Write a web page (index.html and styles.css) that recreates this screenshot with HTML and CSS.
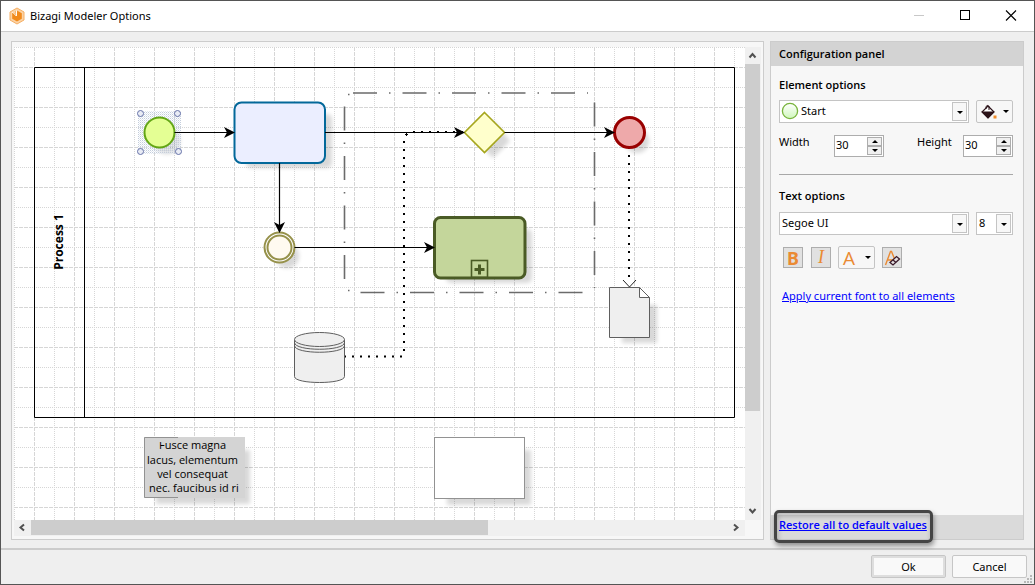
FILE: index.html
```html
<!DOCTYPE html>
<html lang="en">
<head>
<meta charset="utf-8">
<title>Bizagi Modeler Options</title>
<link rel="stylesheet" href="styles.css">
</head>
<body>
<div class="window">
  <header class="titlebar">
    <svg class="logo" width="16" height="18" viewBox="0 0 16 18" aria-hidden="true">
      <path d="M8 1 L15 5 V13 L8 17 L1 13 V5 Z" fill="#fbd3a6" stroke="#f6ae62" stroke-width="1"/>
      <path d="M8 3.6 L12.8 6.2 V11.8 L8 14.6 L3.2 11.8 V6.2 L4.5 5.6 L7 7.6 L6.4 4.6 Z" fill="#f18a1c"/>
      <path d="M3.4 5 L7.4 9 L7.6 3.4" fill="none" stroke="#fff" stroke-width="1"/>
    </svg>
    <h1 class="title">Bizagi Modeler Options</h1>
    <div class="window-buttons">
      <button class="window-button" aria-label="Minimize"><svg width="12" height="12"><path d="M1 5.5H11" stroke="#c8c8c8"/></svg></button>
      <button class="window-button" aria-label="Maximize"><svg width="12" height="12"><rect x="1.500" y="0.500" width="9" height="9" fill="none" stroke="#000"/></svg></button>
      <button class="window-button" aria-label="Close"><svg width="12" height="12"><path d="M1 0.500L11 10.500M11 0.500L1 10.500" stroke="#000" stroke-width="1.1"/></svg></button>
    </div>
  </header>

  <main class="content">
    <section class="canvas-panel">
      <svg class="canvas" role="img" aria-label="Process preview">
        <defs>
          <pattern id="grid" width="40" height="40" patternUnits="userSpaceOnUse">
            <g stroke="#d6d6d6">
              <path d="M0.500 0V40M0 0.500H40" stroke-dasharray="1 1"/>
              <path d="M20.500 0V40M0 20.500H40" stroke-dasharray="4 1"/>
            </g>
          </pattern>
          <pattern id="halftone" width="2" height="2" patternUnits="userSpaceOnUse">
            <rect width="1" height="1" fill="#c3cddc"/><rect x="1" y="1" width="1" height="1" fill="#e2e8f0"/>
          </pattern>
          <filter id="soft" x="-30%" y="-30%" width="160%" height="160%"><feGaussianBlur stdDeviation="2"/></filter>
          <marker id="arrow" markerUnits="userSpaceOnUse" markerWidth="12" markerHeight="12" refX="9" refY="6" orient="auto">
            <path d="M0 0.500 L11 6 L0 11.500 L3 6 Z"/>
          </marker>
        </defs>
        <rect width="100%" height="100%" fill="#fff"/>
        <rect width="100%" height="100%" fill="url(#grid)"/>
        <g transform="translate(-14 -47)">
          <path d="M34.500 67.500H734.500V417.500H34.500ZM84.500 67.500V417.500" fill="none" stroke="#000"/>
          <text class="lane-name" transform="translate(63 242) rotate(-90)" text-anchor="middle">Process 1</text>

          <g fill="#000" opacity=".15" filter="url(#soft)">
            <rect x="246" y="114" width="86" height="54" rx="5"/>
            <rect x="446" y="229" width="86" height="54" rx="5"/>
            <circle cx="167" cy="141" r="13"/>
            <circle cx="287" cy="256" r="12"/>
            <circle cx="637" cy="141" r="12"/>
            <path d="M493 120L510 141L493 158L476 141Z"/>
            <rect x="622" y="305" width="35" height="38"/>
            <rect x="156" y="450" width="94" height="54"/>
            <rect x="447" y="450" width="84" height="55"/>
          </g>

          <g fill="none" stroke="#6b6b6b" stroke-width="1.600">
            <path d="M353 93H588" stroke-dasharray="24 12 1.500 12"/>
            <path d="M344.500 106.500V280" stroke-dasharray="24 12 1.500 12"/>
            <path d="M594.500 102.500V288" stroke-dasharray="24 12 1.500 12"/>
            <path d="M360.500 292.500H584" stroke-dasharray="24 12 1.500 12"/>
            <path d="M348 94.500H349.500M348 290.500H349.500"/>
          </g>

          <path d="M344 356.500H404" fill="none" stroke="#000" stroke-width="2" stroke-dasharray="2 6"/>
          <path d="M404 351V136" fill="none" stroke="#000" stroke-width="2" stroke-dasharray="2 6"/>
          <path d="M413 132H464" fill="none" stroke="#000" stroke-width="2" stroke-dasharray="2 6"/>
          <path d="M405 134.500H408M406.500 133V136" stroke="#000"/>
          <path d="M629 147V278" fill="none" stroke="#000" stroke-width="2" stroke-dasharray="2 6"/>
          <path d="M623 280L629.500 287L636 280" fill="none" stroke="#222"/>

          <rect x="138" y="111" width="43" height="43" fill="url(#halftone)"/>
          <circle cx="159.500" cy="132.500" r="15" fill="#e4ff94" stroke="#62a614" stroke-width="2"/>
          <g fill="#e9ecf5" stroke="#6571a8">
            <circle cx="140.500" cy="113.500" r="3"/><circle cx="177.500" cy="113.500" r="3"/>
            <circle cx="140.500" cy="151.500" r="3"/><circle cx="178.500" cy="151.500" r="3"/>
          </g>

          <rect x="234.500" y="102.500" width="90.500" height="60.500" rx="7" fill="#ebeeff" stroke="#03689a" stroke-width="2"/>
          <rect x="434.500" y="217.500" width="90.500" height="60.500" rx="6" fill="#c4d69b" stroke="#4a5b25" stroke-width="3"/>
          <rect x="471.500" y="260.500" width="16" height="17" fill="none" stroke="#4a5b25" stroke-width="1.600"/>
          <path d="M474.500 269.500H484.500M479.500 264.500V274.500" stroke="#4a5b25" stroke-width="3"/>
          <path d="M484.500 112.500L504.500 132.500L484.500 152.500L464.500 132.500Z" fill="#ffc" stroke="#a6a61d" stroke-width="1.600"/>
          <circle cx="629.500" cy="132.500" r="15" fill="#eea9aa" stroke="#900" stroke-width="3"/>
          <g stroke="#96914a" stroke-width="2">
            <circle cx="279.500" cy="247.500" r="15" fill="#fff"/>
            <circle cx="279.500" cy="247.500" r="12" fill="#fffaf0"/>
          </g>

          <g fill="none" stroke="#000" stroke-width="1.200">
            <path d="M174.500 132.500H233" marker-end="url(#arrow)"/>
            <path d="M325 132.500H463" marker-end="url(#arrow)"/>
            <path d="M504.500 132.500H613" marker-end="url(#arrow)"/>
            <path d="M279.500 163V231" marker-end="url(#arrow)"/>
            <path d="M294.500 247.500H433" marker-end="url(#arrow)"/>
          </g>

          <g fill="#efefef" stroke="#5e5e5e">
            <path d="M294.500 339.500V376.500C294.500 384.500 344.500 384.500 344.500 376.500V339.500"/>
            <path d="M294.500 345.500C294.500 354.500 344.500 354.500 344.500 345.500M294.500 342.500C294.500 351.500 344.500 351.500 344.500 342.500" fill="none"/>
            <ellipse cx="319.500" cy="339.500" rx="25" ry="7"/>
            <path d="M609.500 287.500H639.500L649.500 297.500V337.500H609.500Z"/>
            <path d="M639.500 287.500V297.500H649.500Z" fill="#fff"/>
          </g>

          <rect x="144" y="437" width="101" height="61" fill="#d4d4d4"/>
          <path d="M178 437.500H144.500V497.500H178" fill="none" stroke="#929292"/>
          <clipPath id="note-clip"><rect x="144" y="442" width="101" height="56"/></clipPath>
          <g clip-path="url(#note-clip)">
            <text class="note" text-anchor="middle">
              <tspan x="194" y="449">Fusce magna</tspan>
              <tspan x="194" y="464">lacus, elementum</tspan>
              <tspan x="194" y="478">vel consequat</tspan>
              <tspan x="194" y="492">nec. faucibus id ri</tspan>
            </text>
          </g>
          <rect x="434.500" y="437.500" width="90" height="61" fill="#fff" stroke="#929292"/>
        </g>
      </svg>
      <div class="scroll scroll-vertical">
        <button class="scroll-button" aria-label="Scroll up"><svg width="9" height="9"><path d="M1.500 6.500L4.500 3L7.500 6.500"/></svg></button>
        <div class="scroll-track"><div class="scroll-thumb"></div></div>
        <button class="scroll-button" aria-label="Scroll down"><svg width="9" height="9"><path d="M1.500 2L4.500 5.500L7.500 2"/></svg></button>
      </div>
      <div class="scroll scroll-horizontal">
        <button class="scroll-button" aria-label="Scroll left"><svg width="9" height="9"><path d="M6 1.500L2.500 4.500L6 7.500"/></svg></button>
        <div class="scroll-track"><div class="scroll-thumb"></div></div>
        <button class="scroll-button" aria-label="Scroll right"><svg width="9" height="9"><path d="M2 1.500L5.500 4.500L2 7.500"/></svg></button>
      </div>
    </section>

    <aside class="config">
      <h2 class="config-header">Configuration panel</h2>
      <div class="config-body">
        <h3 class="section-title">Element options</h3>
        <div class="row">
          <div class="picker picker-main">
            <select class="picker-select with-icon" aria-label="Element"><option>Start</option></select>
            <svg class="picker-icon" width="18" height="18"><defs><linearGradient id="leaf" x2="0" y2="1"><stop stop-color="#fff"/><stop offset="1" stop-color="#cff7bb"/></linearGradient></defs><circle cx="9" cy="9" r="7.600" fill="url(#leaf)" stroke="#78b43c" stroke-width="1.300"/></svg>
            <span class="picker-arrow"></span>
          </div>
          <button class="drop-button" aria-label="Fill color">
            <svg width="16" height="16" viewBox="0 0 16 16"><path d="M7 2L13 8L7 14L1 8Z" fill="#fff" stroke="#2b1218" stroke-width="1.200"/><path d="M0.500 7.500H13.500L7 14.500Z" fill="#2b1218"/><path d="M5 5V2.500Q7 0 8 2.500V6" fill="none" stroke="#2b1218"/><rect x="12.500" y="11.500" width="3" height="3" fill="#f08a28"/></svg>
            <span class="caret"></span>
          </button>
        </div>
        <div class="sizes">
          <div class="size">
            <label class="size-label" for="w">Width</label>
            <div class="spinner"><input class="spinner-input" id="w" type="text" value="30"><div class="spinner-buttons"><button class="step" aria-label="Increase width"><span class="caret up"></span></button><button class="step" aria-label="Decrease width"><span class="caret"></span></button></div></div>
          </div>
          <div class="size size-end">
            <label class="size-label" for="h">Height</label>
            <div class="spinner"><input class="spinner-input" id="h" type="text" value="30"><div class="spinner-buttons"><button class="step" aria-label="Increase height"><span class="caret up"></span></button><button class="step" aria-label="Decrease height"><span class="caret"></span></button></div></div>
          </div>
        </div>
        <hr class="divider">
        <h3 class="section-title">Text options</h3>
        <div class="row row-font">
          <div class="picker picker-main">
            <select class="picker-select" aria-label="Font"><option>Segoe UI</option></select>
            <span class="picker-arrow"></span>
          </div>
          <div class="picker picker-size">
            <select class="picker-select" aria-label="Font size"><option>8</option></select>
            <span class="picker-arrow"></span>
          </div>
        </div>
        <div class="toolbar">
          <button class="tool tool-bold">B</button>
          <button class="tool tool-italic">I</button>
          <button class="drop-button tool-color" aria-label="Font color"><span class="letter">A</span><span class="caret"></span></button>
          <button class="tool" aria-label="Clear formatting">
            <svg width="18" height="18" viewBox="0 0 18 18"><path d="M2.500 16L7.500 2.500H8.500L12 11M4.500 11H11" fill="none" stroke="#ea8a33" stroke-width="1.400"/><path d="M7 13.500L13.500 7.500L16.500 10L10 16Z" fill="#e4e0e2" stroke="#3a1a2a" stroke-width="1.300"/><path d="M10 11L13 13.500" stroke="#3a1a2a" stroke-width="1.300"/></svg>
          </button>
        </div>
        <a class="link apply" href="#">Apply current font to all elements</a>
      </div>
      <div class="config-footer">
        <a class="link restore" href="#">Restore all to default values</a>
      </div>
    </aside>
  </main>

  <footer class="actions">
    <button class="action action-default">Ok</button>
    <button class="action">Cancel</button>
    <svg class="grip" width="9" height="9" aria-hidden="true"><path d="M6 0h2v2h-2zM3 3h2v2h-2zM6 3h2v2h-2zM0 6h2v2h-2zM3 6h2v2h-2zM6 6h2v2h-2z" fill="#b8b8b8"/></svg>
  </footer>
</div>
</body>
</html>
```
FILE: styles.css
```css
* { box-sizing: border-box; }

body {
  margin: 0;
  background: #555;
  font: 11px/14px "Noto Sans", "Open Sans", sans-serif;
  color: #000;
}

button, input, select { font: inherit; color: inherit; margin: 0; }
button { padding: 0; }
h1, h2, h3 { margin: 0; font-size: inherit; }

.window {
  display: flex;
  flex-direction: column;
  height: 100vh;
  min-height: 480px;
  border: 1px solid #555;
  background: #efefef;
}

.titlebar {
  display: flex;
  align-items: center;
  height: 31px;
  padding-left: 8px;
  background: #fff;
  border-bottom: 1px solid #ccc;
}
.title { flex: 1; margin-left: 5px; font-weight: 400; }
.window-buttons { display: flex; }
.window-button {
  display: flex;
  align-items: center;
  justify-content: center;
  width: 46px;
  height: 30px;
  border: 0;
  background: none;
}

.content {
  display: flex;
  flex: 1;
  min-height: 0;
  gap: 6px;
  padding: 9px 10px 8px;
  border-bottom: 2px solid #ccc;
}

.canvas-panel {
  display: grid;
  grid-template: 1fr 16px / 1fr 16px;
  flex: 1;
  min-width: 0;
  padding: 5px 2px 3px;
  border: 1px solid #ccc;
  background: #f7f7f7;
}
.canvas { width: 100%; height: 100%; min-height: 0; overflow: hidden; }
.lane-name { font-family: "Open Sans", sans-serif; font-size: 12px; font-weight: 700; }
.note { font-family: "Open Sans", sans-serif; font-size: 11px; }

.scroll { display: flex; background: #f0f0f0; }
.scroll-vertical { flex-direction: column; }
.scroll-button {
  display: flex;
  align-items: center;
  justify-content: center;
  flex: none;
  width: 17px;
  height: 17px;
  border: 0;
  background: none;
}
.scroll-button path { fill: none; stroke: #505050; stroke-width: 2; }
.scroll-track { flex: 1; }
.scroll-thumb { background: #cdcdcd; }
.scroll-vertical .scroll-button { width: 15px; }
.scroll-vertical .scroll-thumb { width: 15px; height: 79%; }
.scroll-horizontal .scroll-button { height: 15px; }
.scroll-horizontal .scroll-thumb { width: 65.5%; height: 15px; }

.config {
  display: flex;
  flex-direction: column;
  width: 254px;
  border: 1px solid #ccc;
  background: #f7f7f7;
}
.config-header,
.section-title,
.restore {
  font-family: "Open Sans", sans-serif;
  font-weight: 600;
}
.config-header { padding: 5px 8px; background: #d3d3d3; }
.config-body { flex: 1; padding: 12px 10px 0 8px; }

.row { display: flex; gap: 7px; margin-top: 8px; }
.row-font { margin-top: 9px; }
.picker { position: relative; height: 23px; }
.picker-main { flex: 1; }
.picker-size { width: 37px; }
.picker-select {
  display: block;
  width: 100%;
  height: 100%;
  padding: 0 18px 2px 2px;
  border: 1px solid #c4c4c4;
  border-radius: 0;
  background: #fff;
  appearance: none;
}
.picker-select.with-icon { padding-left: 21px; }
.picker-icon { position: absolute; left: 2px; top: 2px; }
.picker-arrow {
  position: absolute;
  top: 2px;
  right: 2px;
  bottom: 2px;
  width: 15px;
  border: 1px solid #c4c4c4;
  background: #f7f7f7;
  pointer-events: none;
}
.caret {
  border: 3px solid transparent;
  border-top-color: #000;
  border-bottom: 0;
}
.caret.up { border: 3px solid transparent; border-bottom-color: #000; border-top: 0; }
.picker-arrow::after {
  content: "";
  position: absolute;
  left: 4px;
  top: 8px;
  border: 3px solid transparent;
  border-top-color: #000;
  border-bottom: 0;
}
.drop-button {
  display: flex;
  align-items: center;
  justify-content: space-between;
  width: 37px;
  height: 23px;
  padding: 0 3px 0 4px;
  border: 1px solid #c4c4c4;
  border-radius: 2px;
  background: #f7f7f7;
}

.sizes { display: flex; justify-content: space-between; margin-top: 12px; }
.size { display: flex; }
.size-label { width: 55px; }
.size-end .size-label { width: 46px; }
.spinner {
  display: flex;
  width: 50px;
  height: 22px;
  padding: 1px;
  border: 1px solid #adadad;
  background: #fff;
}
.spinner-input {
  flex: 1;
  min-width: 0;
  padding: 0 0 3px;
  border: 0;
  background: none;
}
.spinner-buttons { display: flex; flex-direction: column; width: 15px; }
.step {
  display: flex;
  flex: 1;
  align-items: center;
  justify-content: center;
  border: 1px solid #adadad;
  background: #f0f0f0;
}

.divider { margin: 17px 0 14px; border: 0; border-top: 1px solid #a8a8a8; }

.toolbar { display: flex; align-items: center; gap: 7px; margin-top: 11px; padding-left: 4px; }
.tool {
  display: flex;
  align-items: center;
  justify-content: center;
  width: 20px;
  height: 21px;
  border: 1px solid #adadad;
  background: #e1e1e1;
  color: #ea8a33;
}
.tool-bold { font-size: 18px; font-weight: 700; }
.tool-italic { margin-left: 1px; font: italic 18px "Liberation Serif", serif; }
.letter { color: #ea8a33; font-family: "Open Sans", sans-serif; font-size: 19px; line-height: 20px; }
.link { color: #00f; }
.apply { display: inline-block; margin: 20px 0 0 3px; }

.config-footer {
  display: flex;
  align-items: flex-start;
  height: 24px;
  padding: 3px 0 0 8px;
  background: #dadada;
}
.restore { position: relative; }
.restore::after {
  content: "";
  position: absolute;
  inset: -8px -6px -11px -5px;
  border: 3px solid #454545;
  border-radius: 5px;
  box-shadow: 1px 3px 5px rgba(0, 0, 0, .4), inset 1px 3px 5px rgba(0, 0, 0, .25);
}

.actions {
  position: relative;
  display: flex;
  justify-content: flex-end;
  gap: 6px;
  padding: 5px 7px 6px;
}
.action {
  width: 75px;
  height: 23px;
  border: 1px solid #c6c6c6;
  border-radius: 2px;
  background: #f9f9f9;
}
.action-default { box-shadow: inset 0 0 0 2px #dedede; }
.grip { position: absolute; right: 1px; bottom: 0; }
```
